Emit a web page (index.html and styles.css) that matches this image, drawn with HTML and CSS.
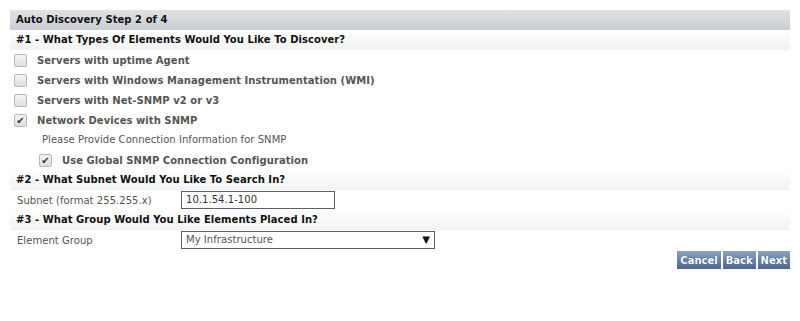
FILE: index.html
```html
<!DOCTYPE html>
<html lang="en">
<head>
    <meta charset="UTF-8">
    <title>Auto Discovery</title>
    <link rel="stylesheet" href="styles.css">
</head>
<body>
    <div class="wizard">
        <div class="title">Auto Discovery Step 2 of 4</div>

        <div class="section">#1 - What Types Of Elements Would You Like To Discover?</div>
        <div class="check-row"><span class="box"></span><span class="check-label">Servers with uptime Agent</span></div>
        <div class="check-row"><span class="box"></span><span class="check-label">Servers with Windows Management Instrumentation (WMI)</span></div>
        <div class="check-row"><span class="box"></span><span class="check-label">Servers with Net-SNMP v2 or v3</span></div>
        <div class="check-row"><span class="box checked">&#10004;</span><span class="check-label">Network Devices with SNMP</span></div>
        <div class="note">Please Provide Connection Information for SNMP</div>
        <div class="check-row nested"><span class="box checked">&#10004;</span><span class="check-label">Use Global SNMP Connection Configuration</span></div>

        <div class="section">#2 - What Subnet Would You Like To Search In?</div>
        <div class="field-row">
            <span class="field-label">Subnet (format 255.255.x)</span>
            <span class="text-input">10.1.54.1-100</span>
        </div>

        <div class="section">#3 - What Group Would You Like Elements Placed In?</div>
        <div class="field-row">
            <span class="field-label">Element Group</span>
            <span class="select">My Infrastructure<span class="arrow">&#9660;</span></span>
        </div>

        <div class="actions">
            <button>Cancel</button>
            <button>Back</button>
            <button>Next</button>
        </div>
    </div>
</body>
</html>
```

FILE: styles.css
```css
body {
    margin: 0;
    padding: 10px;
    background: #fff;
    font-family: "DejaVu Sans", Verdana, sans-serif;
    font-size: 10px;
    letter-spacing: 0.05px;
    color: #555;
}

.wizard {
    width: 780px;
}

.title {
    height: 20px;
    line-height: 20px;
    padding-left: 6px;
    font-weight: bold;
    color: #111;
    background: linear-gradient(#e1e2e4, #c9cdd4);
}

.section {
    height: 20px;
    line-height: 20px;
    padding-left: 6px;
    font-weight: bold;
    color: #111;
    background: linear-gradient(#ffffff, #f1f2f2);
}

.check-row {
    display: flex;
    align-items: center;
    height: 20px;
    padding-left: 4px;
}

.check-row.nested {
    padding-left: 29px;
}

.box {
    width: 11px;
    height: 11px;
    border: 1px solid #b8b8b8;
    border-radius: 2px;
    background: linear-gradient(#f4f4f4, #dedede);
    margin-right: 10px;
    font-size: 10px;
    line-height: 11px;
    text-align: center;
    color: #333;
}

.check-label {
    font-weight: bold;
    color: #555;
}

.note {
    height: 20px;
    line-height: 20px;
    padding-left: 32px;
}

.field-row {
    display: flex;
    align-items: center;
    height: 20px;
    padding-left: 7px;
}

.field-label {
    width: 164px;
}

.text-input {
    width: 148px;
    height: 16px;
    line-height: 16px;
    padding-left: 4px;
    border: 1px solid #5d5b78;
    color: #333;
}

.select {
    display: flex;
    justify-content: space-between;
    width: 244px;
    height: 16px;
    line-height: 16px;
    padding: 0 4px;
    border: 1px solid #5d5b78;
    color: #555;
}

.arrow {
    font-size: 10px;
    color: #111;
}

.actions {
    display: flex;
    justify-content: flex-end;
    gap: 2px;
    margin-top: 1px;
}

.actions button {
    height: 18px;
    padding: 0 3px;
    border: none;
    font-family: "DejaVu Sans", Verdana, sans-serif;
    font-size: 10px;
    font-weight: bold;
    color: #fff;
    text-shadow: 0 0 1px #2a3f66;
    background: linear-gradient(#8aa3c4, #4c6690);
}
```
